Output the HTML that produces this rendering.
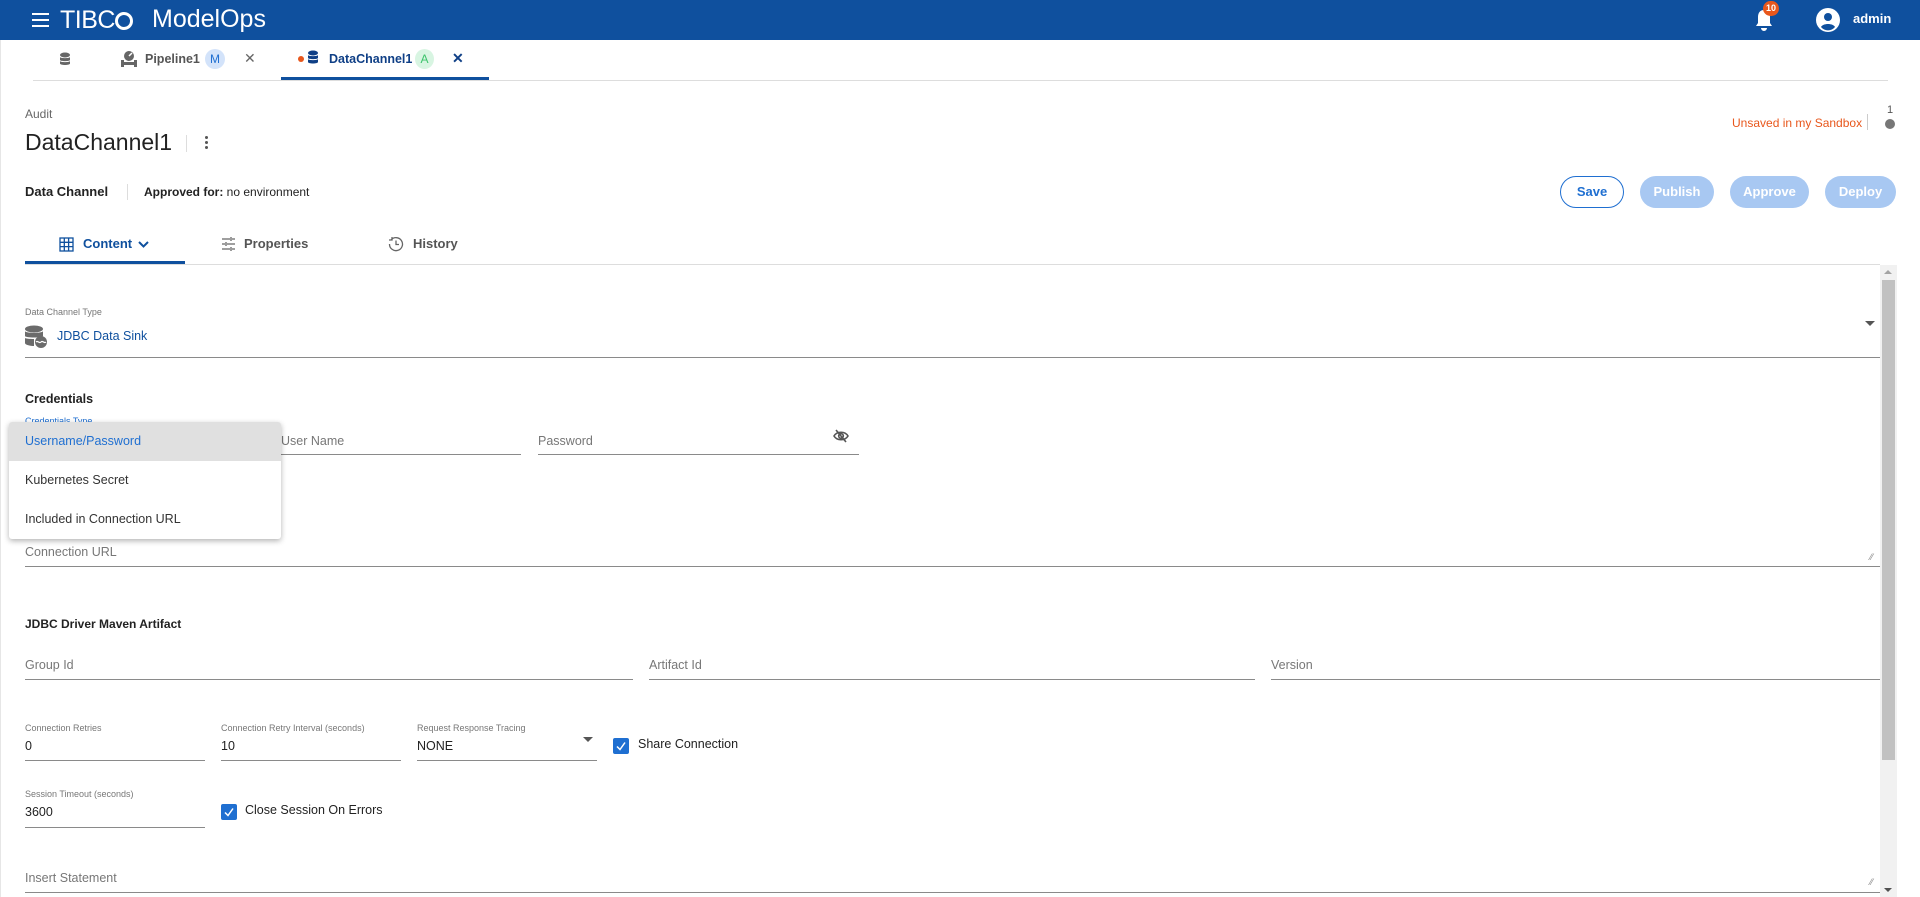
<!DOCTYPE html>
<html><head><meta charset="utf-8"><style>
*{box-sizing:border-box;margin:0;padding:0}
body{width:1920px;height:897px;overflow:hidden;background:#fff;font-family:"Liberation Sans",sans-serif;color:#222;position:relative}
.a{position:absolute;white-space:nowrap}
.line{position:absolute;height:1px;background:#8a8a8a}
.lbl{position:absolute;font-size:9px;color:#777;white-space:nowrap}
.ph{position:absolute;font-size:12.5px;color:#777;white-space:nowrap}
.val{position:absolute;font-size:12.5px;color:#222;white-space:nowrap}
.btn{position:absolute;top:176px;height:32px;border-radius:16px;font-size:13px;font-weight:bold;color:#fff;background:#a8c8f2;text-align:center;line-height:32px}
.cb{position:absolute;width:16px;height:16px;background:#1f6fd1;border-radius:2px}
</style></head><body>
<!-- header -->
<div class="a" style="left:0;top:0;width:1920px;height:40px;background:#0f509e"></div>
<div class="a" style="left:32px;top:13px;width:17px;height:2px;background:#fff;box-shadow:0 6px 0 #fff,0 12px 0 #fff"></div>
<div class="a" style="left:60px;top:6px;font-size:25px;color:#fff;letter-spacing:-0.5px">TIBC<span style="display:inline-block;width:18px;height:18px;border:3px solid #fff;border-radius:50%;vertical-align:-2px"></span></div>
<div class="a" style="left:152px;top:5px;font-size:25px;color:#fff;font-weight:300">ModelOps</div>
<svg class="a" style="left:1753px;top:8px" width="22" height="24" viewBox="0 0 22 24"><path d="M11 2c-4 0-6 3-6 7v6l-2 3h16l-2-3V9c0-4-2-7-6-7z M8 20h6a3 3 0 0 1-6 0z" fill="#fff"/></svg>
<div class="a" style="left:1763px;top:1px;width:16px;height:15px;border-radius:8px;background:#e8571c;color:#fff;font-size:9px;font-weight:bold;text-align:center;line-height:15px">10</div>
<svg class="a" style="left:1816px;top:8px" width="24" height="24" viewBox="0 0 24 24"><circle cx="12" cy="12" r="12" fill="#fff"/><circle cx="12" cy="9" r="4" fill="#0f509e"/><path d="M5 19c2-4 12-4 14 0a9 9 0 0 1-14 0z" fill="#0f509e"/></svg>
<div class="a" style="left:1853px;top:11px;font-size:13px;font-weight:bold;color:#fff">admin</div>
<!-- tabs bar -->
<svg class="a" style="left:59px;top:52px" width="12" height="14" viewBox="0 0 12 14"><ellipse cx="6" cy="3" rx="5" ry="2.5" fill="#666"/><path d="M1 5v3c0 1.5 10 1.5 10 0V5c0 1.5-10 1.5-10 0zM1 9v2.5c0 2 10 2 10 0V9c0 1.5-10 1.5-10 0z" fill="#666"/></svg>
<svg class="a" style="left:120px;top:50px" width="18" height="18" viewBox="0 0 18 18"><circle cx="9" cy="6" r="5" fill="#666"/><path d="M9 6l3-3" stroke="#fff" stroke-width="1.5"/><rect x="1" y="12" width="16" height="3" fill="#666"/><rect x="1" y="10" width="3" height="7" fill="#666"/><rect x="14" y="10" width="3" height="7" fill="#666"/></svg>
<div class="a" style="left:145px;top:52px;font-size:12.5px;color:#555;font-weight:bold">Pipeline1</div>
<div class="a" style="left:205px;top:49px;width:20px;height:20px;border-radius:50%;background:#d3e3fa;color:#1f6fd1;font-size:12px;text-align:center;line-height:20px">M</div>
<div class="a" style="left:244px;top:50px;font-size:14px;color:#666">✕</div>
<div class="a" style="left:298px;top:56px;width:6px;height:6px;border-radius:50%;background:#e8571c"></div>
<svg class="a" style="left:307px;top:50px" width="12" height="15" viewBox="0 0 12 15"><ellipse cx="6" cy="3" rx="5" ry="2.5" fill="#0f3f86"/><path d="M1 5v3c0 1.5 10 1.5 10 0V5c0 1.5-10 1.5-10 0zM1 9v3c0 2 10 2 10 0V9c0 1.5-10 1.5-10 0z" fill="#0f3f86"/></svg>
<div class="a" style="left:329px;top:52px;font-size:12.5px;color:#0f3f86;font-weight:bold">DataChannel1</div>
<div class="a" style="left:415px;top:49px;width:19px;height:20px;border-radius:50%;background:#d8f5e2;color:#3cc36b;font-size:12px;text-align:center;line-height:20px">A</div>
<div class="a" style="left:452px;top:50px;font-size:14px;color:#0f3f86;font-weight:bold">✕</div>
<div class="a" style="left:33px;top:80px;width:1855px;height:1px;background:#ddd"></div>
<div class="a" style="left:281px;top:77px;width:208px;height:3px;background:#0f509e"></div>
<!-- title -->
<div class="a" style="left:25px;top:107px;font-size:12px;color:#666">Audit</div>
<div class="a" style="left:25px;top:129px;font-size:23px;color:#222">DataChannel1</div>
<div class="a" style="left:186px;top:135px;width:1px;height:17px;background:#ddd"></div>
<div class="a" style="left:205px;top:136px;width:3px;height:3px;background:#555;border-radius:50%;box-shadow:0 5px 0 #555,0 10px 0 #555"></div>
<div class="a" style="left:25px;top:184px;font-size:13px;color:#222;font-weight:bold">Data Channel</div>
<div class="a" style="left:127px;top:184px;width:1px;height:16px;background:#ddd"></div>
<div class="a" style="left:144px;top:185px;font-size:12px;color:#222;font-weight:bold">Approved for: <span style="font-weight:normal">no environment</span></div>
<div class="a" style="left:1732px;top:116px;font-size:12px;color:#e8571c">Unsaved in my Sandbox</div>
<div class="a" style="left:1867px;top:114px;width:1px;height:16px;background:#ccc"></div>
<div class="a" style="left:1887px;top:104px;font-size:11px;color:#555">1</div>
<div class="a" style="left:1885px;top:119px;width:10px;height:10px;border-radius:50%;background:#777"></div>
<div class="btn" style="left:1560px;width:64px;background:#fff;border:1.5px solid #1f6fd1;color:#1f6fd1;line-height:29px">Save</div>
<div class="btn" style="left:1640px;width:74px">Publish</div>
<div class="btn" style="left:1730px;width:79px">Approve</div>
<div class="btn" style="left:1825px;width:71px">Deploy</div>
<!-- content tabs -->
<svg class="a" style="left:59px;top:237px" width="15" height="15" viewBox="0 0 15 15" fill="none" stroke="#0f509e" stroke-width="1.3"><rect x="1" y="1" width="13" height="13"/><path d="M5.3 1v13M9.6 1v13M1 5.3h13M1 9.6h13"/></svg>
<div class="a" style="left:83px;top:236px;font-size:13px;color:#0f509e;font-weight:bold">Content</div>
<svg class="a" style="left:138px;top:241px" width="11" height="8" viewBox="0 0 11 8"><path d="M1 1l4.5 4.5L10 1" stroke="#0f509e" stroke-width="2" fill="none"/></svg>
<svg class="a" style="left:221px;top:236px" width="15" height="16" viewBox="0 0 15 16" stroke="#666" stroke-width="1.3"><path d="M1 3h8M11 3h3M10 1v4M1 8h3M6 8h8M5 6v4M1 13h8M11 13h3M10 11v4"/></svg>
<div class="a" style="left:244px;top:236px;font-size:13px;color:#555;font-weight:bold">Properties</div>
<svg class="a" style="left:388px;top:236px" width="16" height="16" viewBox="0 0 16 16" fill="none" stroke="#666" stroke-width="1.3"><path d="M3 4A6.5 6.5 0 1 1 1.5 8"/><path d="M1 4h3V1"/><path d="M8 4.5V8.5h3"/></svg>
<div class="a" style="left:413px;top:236px;font-size:13px;color:#555;font-weight:bold">History</div>
<div class="a" style="left:25px;top:261px;width:160px;height:3px;background:#0f509e"></div>
<div class="a" style="left:25px;top:264px;width:1855px;height:1px;background:#ddd"></div>
<!-- left border -->
<div class="a" style="left:0;top:40px;width:1px;height:857px;background:#e6e6e6"></div>
<!-- scrollbar -->
<div class="a" style="left:1880px;top:265px;width:17px;height:632px;background:#f1f1f1"></div>
<div class="a" style="left:1882px;top:280px;width:13px;height:480px;background:#c1c1c1"></div>
<div class="a" style="left:1884px;top:270px;width:0;height:0;border-left:4px solid transparent;border-right:4px solid transparent;border-bottom:4px solid #a3a3a3"></div>
<div class="a" style="left:1884px;top:888px;width:0;height:0;border-left:4px solid transparent;border-right:4px solid transparent;border-top:4px solid #505050"></div>
<!-- data channel type -->
<div class="lbl" style="left:25px;top:307px">Data Channel Type</div>
<svg class="a" style="left:24px;top:325px" width="24" height="24" viewBox="0 0 24 24"><ellipse cx="10" cy="4" rx="9" ry="3.5" fill="#6b6b6b"/><path d="M1 6v5c0 2 18 2 18 0V6c0 2.5-18 2.5-18 0zM1 13v5c0 2 6 3 9 3V14c-4 0-9-.5-9-1z" fill="#6b6b6b"/><circle cx="17" cy="17" r="6" fill="#6b6b6b"/><path d="M12 17c2-2 3 2 5 0s3 2 5 0" stroke="#fff" stroke-width="1.2" fill="none"/></svg>
<div class="val" style="left:57px;top:329px;color:#0f509e">JDBC Data Sink</div>
<div class="a" style="left:1865px;top:321px;width:0;height:0;border-left:5px solid transparent;border-right:5px solid transparent;border-top:5px solid #555"></div>
<div class="line" style="left:25px;top:357px;width:1855px"></div>
<!-- credentials -->
<div class="a" style="left:25px;top:392px;font-size:12.5px;font-weight:bold;color:#222">Credentials</div>
<div class="lbl" style="left:25px;top:416px;color:#1f6fd1">Credentials Type</div>
<div class="ph" style="left:281px;top:434px">User Name</div>
<div class="line" style="left:281px;top:454px;width:240px"></div>
<div class="ph" style="left:538px;top:434px">Password</div>
<svg class="a" style="left:833px;top:429px" width="16" height="14" viewBox="0 0 16 14" fill="none" stroke="#555" stroke-width="1.6"><path d="M1 7c3-5 11-5 14 0c-3 5-11 5-14 0z"/><circle cx="8" cy="7" r="2.3"/><path d="M3 1l10 12"/></svg>
<div class="line" style="left:538px;top:454px;width:321px"></div>
<!-- dropdown -->
<div class="a" style="left:9px;top:422px;width:272px;height:117px;background:#fff;border-radius:3px;box-shadow:0 2px 6px rgba(0,0,0,.3)"></div>
<div class="a" style="left:9px;top:422px;width:272px;height:39px;background:#e0e0e0;border-radius:3px 3px 0 0"></div>
<div class="val" style="left:25px;top:434px;color:#1f6fd1">Username/Password</div>
<div class="val" style="left:25px;top:473px;color:#333">Kubernetes Secret</div>
<div class="val" style="left:25px;top:512px;color:#333">Included in Connection URL</div>
<div class="ph" style="left:25px;top:545px">Connection URL</div>
<div class="a" style="left:1870px;top:552px;font-size:9px;color:#888">⁄⁄</div>
<div class="line" style="left:25px;top:566px;width:1855px"></div>
<!-- jdbc driver -->
<div class="a" style="left:25px;top:617px;font-size:12px;font-weight:bold;color:#222">JDBC Driver Maven Artifact</div>
<div class="ph" style="left:25px;top:658px">Group Id</div>
<div class="line" style="left:25px;top:679px;width:608px"></div>
<div class="ph" style="left:649px;top:658px">Artifact Id</div>
<div class="line" style="left:649px;top:679px;width:606px"></div>
<div class="ph" style="left:1271px;top:658px">Version</div>
<div class="line" style="left:1271px;top:679px;width:609px"></div>
<!-- row -->
<div class="lbl" style="left:25px;top:723px">Connection Retries</div>
<div class="val" style="left:25px;top:739px">0</div>
<div class="line" style="left:25px;top:760px;width:180px"></div>
<div class="lbl" style="left:221px;top:723px">Connection Retry Interval (seconds)</div>
<div class="val" style="left:221px;top:739px">10</div>
<div class="line" style="left:221px;top:760px;width:180px"></div>
<div class="lbl" style="left:417px;top:723px">Request Response Tracing</div>
<div class="val" style="left:417px;top:739px">NONE</div>
<div class="a" style="left:583px;top:737px;width:0;height:0;border-left:5px solid transparent;border-right:5px solid transparent;border-top:5px solid #555"></div>
<div class="line" style="left:417px;top:760px;width:180px"></div>
<div class="cb" style="left:613px;top:738px"></div>
<svg class="a" style="left:613px;top:738px" width="16" height="16" viewBox="0 0 16 16"><path d="M4 8.5l3 3 5-7" stroke="#fff" stroke-width="1.5" fill="none"/></svg>
<div class="val" style="left:638px;top:737px">Share Connection</div>
<div class="lbl" style="left:25px;top:789px">Session Timeout (seconds)</div>
<div class="val" style="left:25px;top:805px">3600</div>
<div class="line" style="left:25px;top:827px;width:180px"></div>
<div class="cb" style="left:221px;top:804px"></div>
<svg class="a" style="left:221px;top:804px" width="16" height="16" viewBox="0 0 16 16"><path d="M4 8.5l3 3 5-7" stroke="#fff" stroke-width="1.5" fill="none"/></svg>
<div class="val" style="left:245px;top:803px">Close Session On Errors</div>
<div class="ph" style="left:25px;top:871px">Insert Statement</div>
<div class="a" style="left:1870px;top:877px;font-size:9px;color:#888">⁄⁄</div>
<div class="line" style="left:25px;top:892px;width:1855px"></div>
</body></html>
